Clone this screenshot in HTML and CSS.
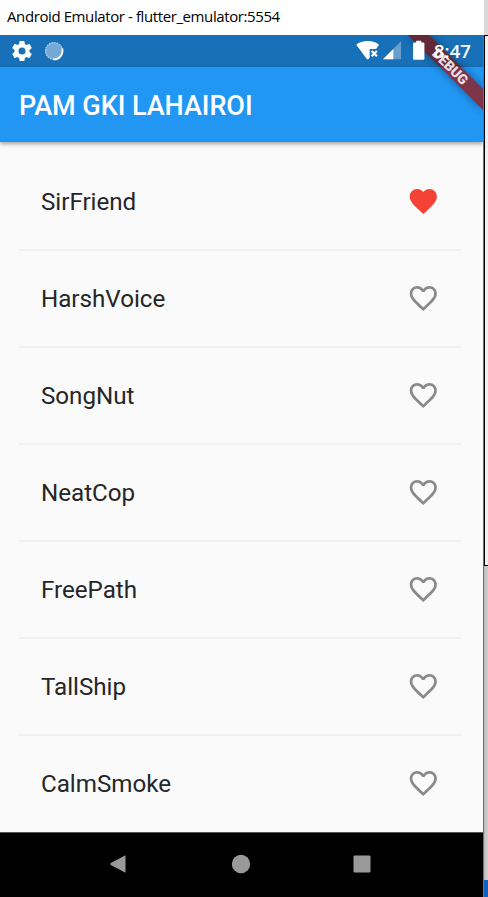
FILE: index.html
```html
<!DOCTYPE html>
<html lang="en">
<head>
<meta charset="utf-8">
<title>PAM GKI LAHAIROI</title>
<link rel="stylesheet" href="styles.css">
</head>
<body>
<svg class="defs" width="0" height="0">
  <symbol id="fav" viewBox="0 0 24 24"><path d="M12 21.35l-1.45-1.32C5.4 15.36 2 12.28 2 8.5 2 5.42 4.42 3 7.5 3c1.74 0 3.41.81 4.5 2.09C13.09 3.81 14.76 3 16.5 3 19.58 3 22 5.42 22 8.5c0 3.78-3.4 6.86-8.55 11.54L12 21.35z"/></symbol>
  <symbol id="fav-o" viewBox="0 0 24 24"><path d="M16.5 3c-1.74 0-3.41.81-4.5 2.09C10.91 3.81 9.24 3 7.5 3 4.42 3 2 5.42 2 8.5c0 3.78 3.4 6.86 8.55 11.54L12 21.35l1.45-1.32C18.6 15.36 22 12.28 22 8.5 22 5.42 19.58 3 16.5 3zm-4.4 15.55l-.1.1-.1-.1C7.14 14.24 4 11.39 4 8.5 4 6.5 5.5 5 7.5 5c1.54 0 3.04.99 3.57 2.36h1.87C13.46 5.99 14.96 5 16.5 5c2 0 3.5 1.5 3.5 3.5 0 2.89-3.14 5.74-7.9 10.05z"/></symbol>
</svg>
<div class="desktop">
  <div class="window">
    <header class="titlebar"><span class="window-title">Android Emulator - flutter_emulator:5554</span></header>
    <main class="screen">
      <svg class="banner" width="100" height="90" viewBox="0 0 100 90">
        <path class="banner-shadow" d="M25 0H46L100 54V75z"/>
        <path class="banner-band" d="M25 0H46L100 54V75z"/>
        <path class="banner-shade" d="M25 0H46L78 32H57z"/>
        <text class="banner-text" x="0" y="4.9" text-anchor="middle" textLength="44" transform="translate(67.2 31.7) rotate(45)">DEBUG</text>
      </svg>
      <div class="statusbar">
        <svg class="gear" viewBox="2 2 20 20"><path fill="#fff" d="M19.43 12.98c.04-.32.07-.64.07-.98s-.03-.66-.07-.98l2.11-1.65c.19-.15.24-.42.12-.64l-2-3.46c-.12-.22-.39-.3-.61-.22l-2.49 1c-.52-.4-1.08-.73-1.69-.98l-.38-2.65A.49.49 0 0 0 14 2h-4c-.25 0-.46.18-.49.42l-.38 2.65c-.61.25-1.17.59-1.69.98l-2.49-1c-.23-.09-.49 0-.61.22l-2 3.46c-.13.22-.07.49.12.64l2.11 1.65c-.04.32-.07.65-.07.98s.03.66.07.98l-2.11 1.65c-.19.15-.24.42-.12.64l2 3.46c.12.22.39.3.61.22l2.49-1c.52.4 1.08.73 1.69.98l.38 2.65c.03.24.24.42.49.42h4c.25 0 .46-.18.49-.42l.38-2.65c.61-.25 1.17-.59 1.69-.98l2.49 1c.23.09.49 0 .61-.22l2-3.46c.12-.22.07-.49-.12-.64l-2.11-1.65zM12 15.500a3.500 3.500 0 1 1 0-7 3.500 3.500 0 0 1 0 7z"/></svg>
        <svg class="spinner" viewBox="0 0 20 20"><circle cx="10" cy="10" r="9" fill="#74a9d5"/><circle cx="10" cy="10" r="8.300" fill="none" stroke="#a5c8e4" stroke-width="1.600" stroke-dasharray="1.400 1.200"/><path d="M18.200 7.500A8.600 8.600 0 0 1 9 18.400" fill="none" stroke="#fff" stroke-width="1.800"/></svg>
        <svg class="signals" width="76" height="24" viewBox="0 0 76 24">
          <path fill="#fff" d="M0.300 5.700C3 3.300 7 2 11.700 2S20.300 3.300 23 5.700L20.100 10H13.700V18.500L12.800 19.700Q11.700 20.700 10.600 19.700z"/>
          <path stroke="#fff" stroke-width="2.100" d="M15.700 11.900l5.200 5.400M20.900 11.900l-5.200 5.400"/>
          <path fill="#659fcf" d="M45 2.300V20.300H27z"/>
          <path fill="#fff" d="M37.300 10V20.300H27z"/>
          <path fill="#fff" d="M60.200 1.800h5v1.800h2.200q1 0 1 1v15.200q0 1-1 1h-9.300q-1 0-1-1V4.600q0-1 1-1h2.100z"/>
        </svg>
        <span class="clock">8:47</span>
      </div>
      <div class="appbar"><h1>PAM GKI LAHAIROI</h1></div>
      <ul class="list">
        <li><span>SirFriend</span><svg class="heart saved"><use href="#fav"/></svg></li>
        <li><span>HarshVoice</span><svg class="heart"><use href="#fav-o"/></svg></li>
        <li><span>SongNut</span><svg class="heart"><use href="#fav-o"/></svg></li>
        <li><span>NeatCop</span><svg class="heart"><use href="#fav-o"/></svg></li>
        <li><span>FreePath</span><svg class="heart"><use href="#fav-o"/></svg></li>
        <li><span>TallShip</span><svg class="heart"><use href="#fav-o"/></svg></li>
        <li><span>CalmSmoke</span><svg class="heart"><use href="#fav-o"/></svg></li>
      </ul>
      <nav class="navbar">
        <svg viewBox="0 0 20 20"><path d="M16.500 1.200V18.800L1.800 10.900Q.8 10 1.800 9.100z"/></svg>
        <svg viewBox="0 0 20 20"><circle cx="10" cy="10" r="9.200"/></svg>
        <svg viewBox="0 0 20 20"><rect x="1.500" y="1.500" width="17" height="17" rx="1"/></svg>
      </nav>
    </main>
  </div>
  <aside class="behind">
    <div class="behind-top"></div>
    <div class="behind-panel"></div>
    <div class="behind-gray"></div>
    <div class="behind-blue"></div>
  </aside>
</div>
</body>
</html>
```
FILE: styles.css
```css
* { box-sizing: border-box; }
body { margin: 0; background: #fff; font-family: Roboto, sans-serif; overflow: hidden; }
.defs { position: absolute; }
.desktop { display: flex; width: 488px; height: 897px; }
.window { width: 484px; border-right: 1px solid #707070; display: flex; flex-direction: column; }
.titlebar { height: 35px; padding-left: 7px; background: #fff; flex: none; margin-right: -1px; }
.window-title { font: 15px/33px "Open Sans", sans-serif; letter-spacing: -0.4px; color: #000; white-space: nowrap; }
.screen { position: relative; flex: 1; display: flex; flex-direction: column; background: #fafafa; overflow: hidden; }
.statusbar { height: 32px; flex: none; display: flex; align-items: flex-start; background: #1870b8; color: #fff; }
.gear { width: 20px; height: 20px; margin: 6px 0 0 12px; }
.spinner { width: 20px; height: 20px; margin: 6px 0 0 12px; }
.signals { position: relative; z-index: 3; margin: 4px 0 0 292px; }
.clock { position: relative; z-index: 3; margin-left: 2px; font: 600 18.5px/32px "Open Sans", sans-serif; }
.appbar { height: 75px; flex: none; display: flex; align-items: center; padding: 2px 0 0 19px; background: #2196f3; box-shadow: 0 2px 4px rgba(0,0,0,.35); }
h1 { margin: 0; font-size: 27px; font-weight: 500; line-height: 32px; letter-spacing: -0.04px; color: #fff; white-space: nowrap; }
.banner { position: absolute; top: 0; right: 0; z-index: 2; }
.banner-shadow { fill: #000; opacity: .4; filter: blur(4px); }
.banner-band { fill: #7f3549; }
.banner-shade { fill: #000; opacity: .22; }
.banner-text { font: 900 13.8px Roboto, sans-serif; fill: #e8dfe3; }
.list { list-style: none; margin: 0; padding: 12px 22px 0 19px; flex: 1; min-height: 0; }
.list li { height: 97px; display: flex; align-items: center; justify-content: space-between; padding: 0 21px 0 22px; border-bottom: 2px solid #f1f1f1; font-size: 24.2px; letter-spacing: -0.02px; color: #262626; }
.list li:last-child { border-color: transparent; }
.heart { width: 32.6px; height: 32.6px; fill: #8a8a8a; }
.heart.saved { fill: #f44336; }
.navbar { height: 65px; flex: none; display: flex; align-items: center; justify-content: space-between; padding: 0 111px 2px 109px; background: #000; border-top: 1px solid #555; }
.navbar svg { width: 20px; height: 20px; fill: #999; }
.behind { flex: 1; display: flex; flex-direction: column; }
.behind-top { height: 35px; background: #d8d8d8; }
.behind-panel { height: 531px; background: #f0f0f0; border: solid #000; border-width: 1px 0 1px 1px; }
.behind-gray { flex: 1; background: linear-gradient(90deg, #bbb, #d2d2d2); }
.behind-blue { height: 17px; background: #155fbd; }
```
